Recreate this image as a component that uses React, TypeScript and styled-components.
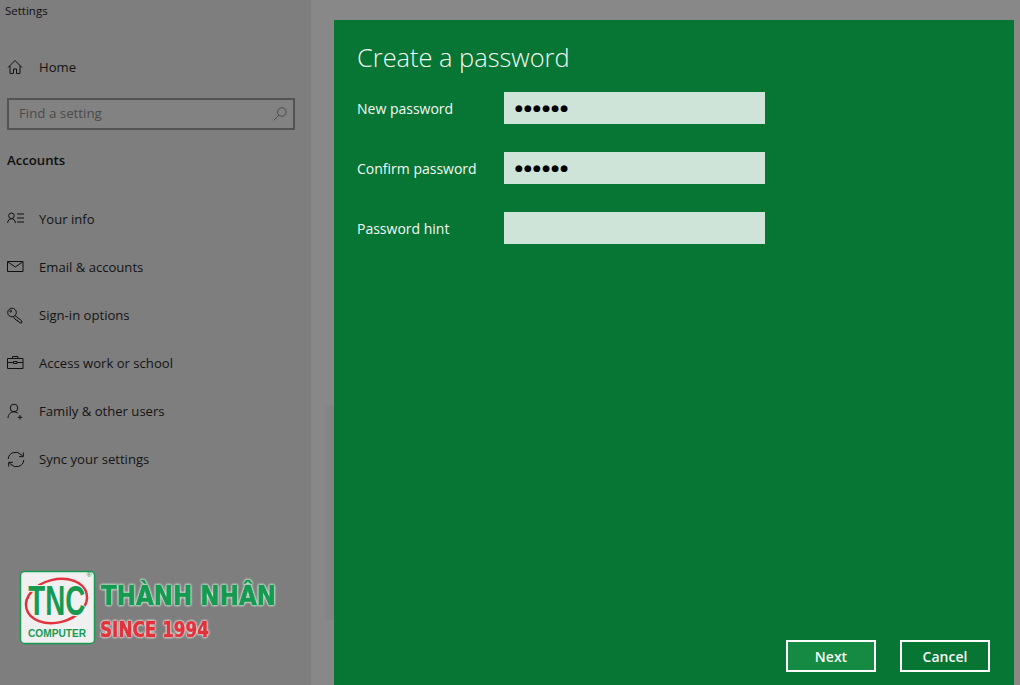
// App.tsx
import React from "react";
import styled, { createGlobalStyle } from "styled-components";

const GlobalStyle = createGlobalStyle`
  html, body {
    margin: 0;
    padding: 0;
    height: 100%;
    overflow: hidden;
    background: #888888;
  }
  #root {
    height: 100%;
  }
  * {
    box-sizing: border-box;
  }
`;

const font = `"Open Sans", "Noto Sans", sans-serif`;

const Page = styled.div`
  position: relative;
  display: flex;
  width: 1020px;
  height: 685px;
  font-family: ${font};
  background: #888888;
`;

const Sidebar = styled.aside`
  width: 311px;
  flex-shrink: 0;
  background: #7e7e7e;
  color: #0e0e0e;
`;

const WindowTitle = styled.div`
  height: 43px;
  padding: 3px 0 0 5px;
  font-size: 11.5px;
  line-height: 16px;
  color: #111;
`;

const Row = styled.div`
  display: flex;
  align-items: center;
  height: 48px;
  padding-left: 7px;
  font-size: 13.1px;
  color: #141414;
`;

const HomeRow = styled(Row)`
  height: 48px;
  margin-bottom: 7px;
`;

const IconBox = styled.span`
  display: flex;
  width: 32px;
  flex-shrink: 0;

  svg {
    display: block;
    fill: none;
    stroke: #101010;
    stroke-width: 1;
  }
`;

const SearchBox = styled.div`
  display: flex;
  align-items: center;
  justify-content: space-between;
  width: 288px;
  height: 32px;
  margin-left: 7px;
  padding: 0 5px 2px 10px;
  border: 2px solid #535353;
  background: #828282;
  font-size: 13.3px;
  color: #4a4a4a;

  svg {
    fill: none;
    stroke: #4c4c4c;
    stroke-width: 1;
    margin-top: 2px;
  }
`;

const SectionTitle = styled.div`
  height: 65px;
  padding: 20px 0 0 7px;
  font-size: 13.2px;
  line-height: 20px;
  font-weight: 600;
  color: #0e0e0e;
`;

const Main = styled.main`
  flex: 1;
  display: flex;
  padding: 20px 6px 0 14px;
`;

const Gutter = styled.div`
  width: 9px;
  height: 215px;
  margin-top: 385px;
  background: #848484;
`;

const Dialog = styled.section`
  flex: 1;
  display: flex;
  flex-direction: column;
  padding: 20px 24px 13px 23px;
  background: #077533;
  color: #f4f9f6;
`;

const Heading = styled.h1`
  margin: 0 0 17px;
  font-size: 25.4px;
  line-height: 35px;
  font-weight: 300;
`;

const Form = styled.div`
  display: grid;
  grid-template-columns: 147px 261px;
  grid-auto-rows: 32px;
  row-gap: 28px;
  align-items: center;
`;

const Label = styled.label`
  padding-top: 1px;
  font-size: 14px;
`;

const Field = styled.input`
  width: 261px;
  height: 32px;
  padding: 0 11px;
  border: 0;
  border-radius: 0;
  outline: none;
  background: #cfe4d8;
  color: #000;
  font-family: "DejaVu Sans", sans-serif;
  font-size: 9px;
  letter-spacing: 1.2px;
`;

const Actions = styled.div`
  display: flex;
  justify-content: flex-end;
  gap: 24px;
  margin-top: auto;
`;

const Button = styled.button<{ $primary?: boolean }>`
  width: 90px;
  height: 32px;
  padding: 0;
  border: 2px solid #ffffff;
  border-radius: 0;
  background: ${(p) => (p.$primary ? "#148a42" : "#077533")};
  color: #f7fbf8;
  font-family: ${font};
  font-size: 14px;
  font-weight: 600;
`;

const Watermark = styled.svg`
  position: absolute;
  left: 18px;
  top: 569px;
  overflow: visible;
`;

const BrandText = styled.text<{ $color: string }>`
  font-family: "DejaVu Sans", sans-serif;
  font-weight: 700;
  fill: ${(p) => p.$color};
  stroke: ${(p) => p.$color};
  stroke-width: 0.7px;
  filter: drop-shadow(0 0 1px #f0f0f0) drop-shadow(0 0 0.5px #f0f0f0);
`;

const HomeIcon = () => (
  <svg width="16" height="16" viewBox="0 0 16 16">
    <path d="M1 8.5 8 1.5l7 7M3 7v7.5h3.5V10h3v4.5H13V7" />
  </svg>
);

const InfoIcon = () => (
  <svg width="18" height="16" viewBox="0 0 18 16">
    <circle cx="4.5" cy="4.8" r="2.8" />
    <path d="M.6 12c.3-2.8 1.8-4.3 3.9-4.3s3.6 1.5 3.9 4.3M10 3h7M10 7h7M10 11h7" />
  </svg>
);

const MailIcon = () => (
  <svg width="17" height="16" viewBox="0 0 17 16">
    <path d="M.5 2.5h15.5v10H.5zM.7 2.8l7.6 5.2 7.5-5.2" />
  </svg>
);

const KeyIcon = () => (
  <svg width="17" height="17" viewBox="0 0 17 17">
    <circle cx="5" cy="5.5" r="4.3" />
    <circle cx="3.7" cy="4.2" r=".9" />
    <path d="m8 8.6 6.8 5.3v2h-2l-.8-1.4h-1.2l-.5-1.4H9l-3-3.7" />
  </svg>
);

const CaseIcon = () => (
  <svg width="17" height="16" viewBox="0 0 17 16">
    <path d="M.5 3.5h15.5v10H.5zM5.5 3.5V1.5h5.5v2M.5 7.5h6M10 7.5h6M6.5 6.5h3.5v2H6.5z" />
  </svg>
);

const FamilyIcon = () => (
  <svg width="17" height="17" viewBox="0 0 17 17">
    <circle cx="7" cy="5" r="3.8" />
    <path d="M1 15c.2-3.6 2.7-6.2 6-6.2 1.4 0 2.7.5 3.7 1.4M13 12v4.5M10.8 14.3h4.5" />
  </svg>
);

const SyncIcon = () => (
  <svg width="18" height="17" viewBox="0 0 18 17">
    <path d="M1.2 8A7.4 7.4 0 0 1 14 3.6L16 5.5M16.3 1.5v4.2h-4.2M16.8 9A7.4 7.4 0 0 1 4 13.4L2 11.5M1.7 15.5v-4.2h4.2" />
  </svg>
);

const SearchIcon = () => (
  <svg width="16" height="16" viewBox="0 0 16 16">
    <circle cx="9.8" cy="6" r="4.3" />
    <path d="M6.8 9.2 1.8 14.4" />
  </svg>
);

const navItems = [
  { label: "Your info", icon: <InfoIcon /> },
  { label: "Email & accounts", icon: <MailIcon /> },
  { label: "Sign-in options", icon: <KeyIcon /> },
  { label: "Access work or school", icon: <CaseIcon /> },
  { label: "Family & other users", icon: <FamilyIcon /> },
  { label: "Sync your settings", icon: <SyncIcon /> },
];

const Logo = () => (
  <Watermark width="262" height="78" viewBox="0 0 262 78">
    <rect x="2.5" y="2.5" width="74" height="72" rx="4" fill="#f0f0f0" stroke="#159a50" strokeWidth="1.5" />
    <ellipse cx="38.5" cy="32" rx="31" ry="21.5" fill="none" stroke="#e0333c" strokeWidth="2.5" transform="rotate(-14 38.5 32)" />
    <text transform="translate(38.7 46) scale(.66 1)" textAnchor="middle" fontFamily="Liberation Sans, sans-serif" fontWeight="700" fontSize="42" fill="#159a50" stroke="#f0f0f0" strokeWidth="2" paintOrder="stroke">TNC</text>
    <text x="39" y="68" textAnchor="middle" fontFamily="Liberation Sans, sans-serif" fontWeight="700" fontSize="11" textLength="58" lengthAdjust="spacingAndGlyphs" fill="#159a50">COMPUTER</text>
    <text x="71" y="8" textAnchor="middle" fontFamily="Liberation Sans, sans-serif" fontSize="7" fill="#159a50">®</text>
    <BrandText $color="#159a50" x="83" y="36" fontSize="27" textLength="175" lengthAdjust="spacingAndGlyphs">THÀNH NHÂN</BrandText>
    <BrandText $color="#e0333c" x="82" y="68" fontSize="22" textLength="109" lengthAdjust="spacingAndGlyphs">SINCE 1994</BrandText>
  </Watermark>
);

const App: React.FC = () => {
  return (
    <Page>
      <GlobalStyle />
      <Sidebar>
        <WindowTitle>Settings</WindowTitle>
        <HomeRow>
          <IconBox>
            <HomeIcon />
          </IconBox>
          Home
        </HomeRow>
        <SearchBox>
          Find a setting
          <SearchIcon />
        </SearchBox>
        <SectionTitle>Accounts</SectionTitle>
        {navItems.map((item) => (
          <Row key={item.label}>
            <IconBox>{item.icon}</IconBox>
            {item.label}
          </Row>
        ))}
      </Sidebar>
      <Main>
        <Gutter />
        <Dialog>
          <Heading>Create a password</Heading>
          <Form>
            <Label>New password</Label>
            <Field type="text" defaultValue="●●●●●●" readOnly />
            <Label>Confirm password</Label>
            <Field type="text" defaultValue="●●●●●●" readOnly />
            <Label>Password hint</Label>
            <Field type="text" readOnly />
          </Form>
          <Actions>
            <Button $primary>Next</Button>
            <Button>Cancel</Button>
          </Actions>
        </Dialog>
      </Main>
      <Logo />
    </Page>
  );
};

export default App;
